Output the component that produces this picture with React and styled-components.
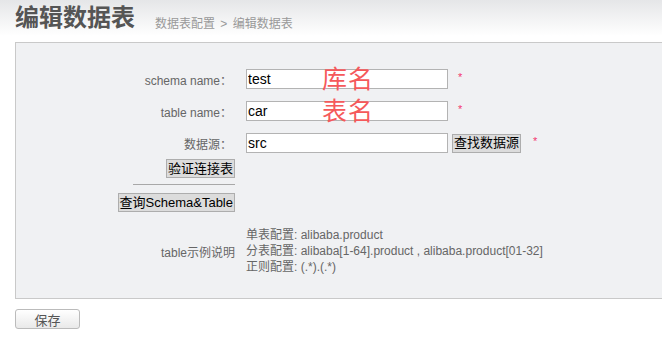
import React from 'react';
import styled, { createGlobalStyle } from 'styled-components';

const GlobalStyle = createGlobalStyle`
  body {
    margin: 0;
    background: #fff;
    font-family: "Liberation Sans", Arial, "Noto Sans CJK SC", sans-serif;
  }
`;

const Page = styled.div`
  width: 662px;
  height: 355px;
  overflow: hidden;
`;

const Header = styled.div`
  display: flex;
  align-items: flex-end;
  height: 36px;
  padding-left: 15px;
  background: linear-gradient(#e5e6e8, #fff);
`;

const Title = styled.h1`
  margin: 0 0 4px;
  font-size: 24px;
  font-weight: bold;
  color: #555;
  line-height: 28px;
`;

const Crumbs = styled.div`
  margin: 0 0 5px 20px;
  font-size: 12px;
  color: #999;
  word-spacing: 2px;
`;

const Panel = styled.div`
  margin: 6px 0 0 15px;
  height: 229px;
  padding-top: 26px;
  border: 1px solid #c9c9c9;
  border-right: none;
  background: #f0f1f3;
`;

const Row = styled.div`
  position: relative;
  display: grid;
  grid-template-columns: 219px 1fr;
  column-gap: 11px;
  align-items: center;
  height: ${p => p.$h || 20}px;
  margin-bottom: ${p => p.$mb ?? 12}px;
`;

const Label = styled.div`
  text-align: right;
  font-size: 12px;
  color: #666;
  padding-right: ${p => p.$pr ?? 3}px;
`;

const Field = styled.div`
  display: flex;
  align-items: center;
`;

const Input = styled.input`
  box-sizing: border-box;
  width: 202px;
  height: 20px;
  padding: 0 1px;
  border: 1px solid #b3b3b3;
  background: #fff;
  font: 14px "Liberation Sans", Arial, sans-serif;
  color: #000;
  outline: none;
`;

const Star = styled.span`
  margin-left: ${p => p.$ml || 10}px;
  font-size: 11px;
  color: #f3386f;
  position: relative;
  top: -2px;
`;

const OldButton = styled.button`
  box-sizing: border-box;
  height: 19px;
  margin-left: ${p => p.$ml || 0}px;
  padding: 0 1px;
  border: 1px solid #adadad;
  background: #dcdcdc;
  font: 13px "Liberation Sans", Arial, "Noto Sans CJK SC", sans-serif;
  color: #000;
  line-height: 16px;
`;

const RightCell = styled.div`
  display: flex;
  flex-direction: column;
  align-items: flex-end;
`;

const Rule = styled.div`
  width: 102px;
  height: 0;
  border-top: 1px solid #a8a8a8;
  margin: 6px 0 8px;
`;

const Note = styled.span`
  position: absolute;
  left: 306px;
  top: -6px;
  font: 25px "Noto Sans CJK SC", sans-serif;
  line-height: 28px;
  color: #f5595b;
  letter-spacing: 1px;
  pointer-events: none;
`;

const Examples = styled.div`
  font-size: 12px;
  line-height: 16px;
  color: #666;
`;

const SaveButton = styled.button`
  display: block;
  box-sizing: border-box;
  width: 65px;
  height: 20px;
  margin: 10px 0 0 15px;
  border: 1px solid #bbb;
  border-radius: 3px;
  background: linear-gradient(#fff, #e9e9e9);
  font: 13px "Liberation Sans", "Noto Sans CJK SC", sans-serif;
  color: #555;
  padding: 0;
`;

export default function App() {
  return (
    <Page>
      <GlobalStyle />
      <Header>
        <Title>编辑数据表</Title>
        <Crumbs>数据表配置 &gt; 编辑数据表</Crumbs>
      </Header>
      <Panel>
        <Row>
          <Label>schema name：</Label>
          <Field>
            <Input defaultValue="test" />
            <Star>*</Star>
          </Field>
          <Note>库名</Note>
        </Row>
        <Row>
          <Label>table name：</Label>
          <Field>
            <Input defaultValue="car" />
            <Star>*</Star>
          </Field>
          <Note>表名</Note>
        </Row>
        <Row $mb={6}>
          <Label>数据源：</Label>
          <Field>
            <Input defaultValue="src" />
            <OldButton $ml={4}>查找数据源</OldButton>
            <Star $ml={12}>*</Star>
          </Field>
        </Row>
        <Row $h={53} $mb={15}>
          <RightCell>
            <OldButton>验证连接表</OldButton>
            <Rule />
            <OldButton>查询Schema&amp;Table</OldButton>
          </RightCell>
        </Row>
        <Row $h={48} $mb={0}>
          <Label $pr={0}>table示例说明</Label>
          <Examples>
            <div>单表配置: alibaba.product</div>
            <div>分表配置: alibaba[1-64].product , alibaba.product[01-32]</div>
            <div>正则配置: (.*).(.*)</div>
          </Examples>
        </Row>
      </Panel>
      <SaveButton>保存</SaveButton>
    </Page>
  );
}
